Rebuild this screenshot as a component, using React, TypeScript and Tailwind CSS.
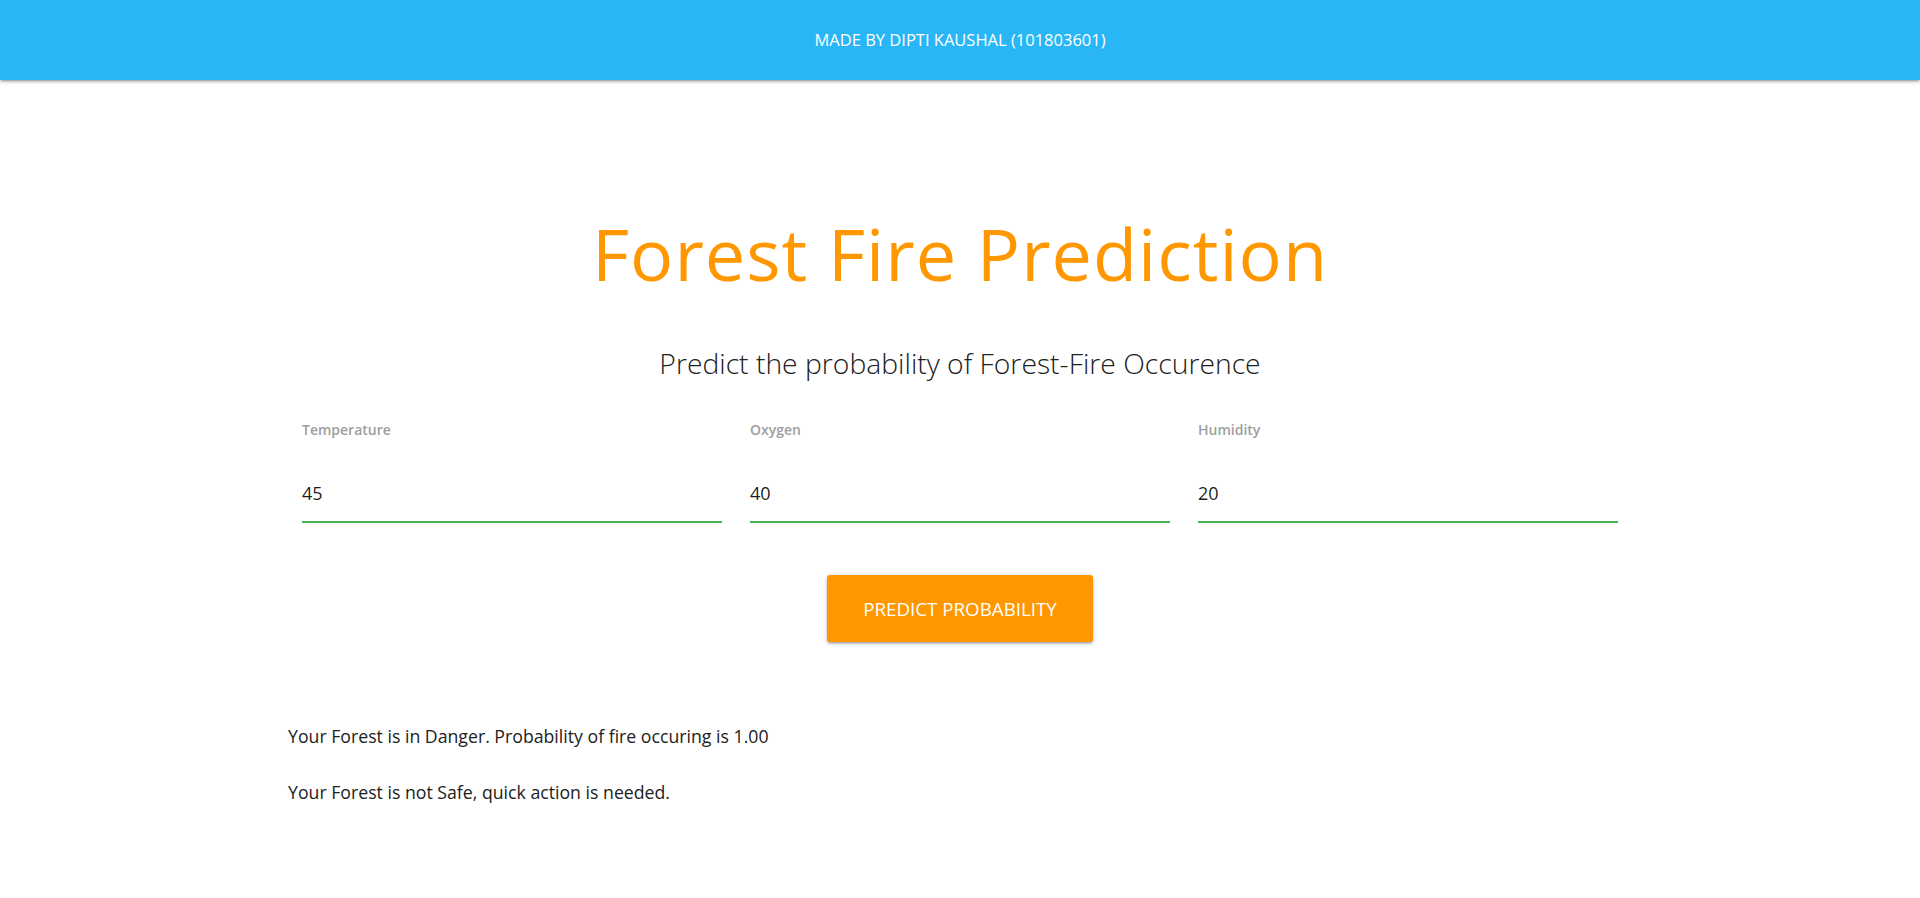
import React from 'react';

const fields = [
  { id: 'temperature', label: 'Temperature', value: '45' },
  { id: 'oxygen', label: 'Oxygen', value: '40' },
  { id: 'humidity', label: 'Humidity', value: '20' },
];

export default function App() {
  return (
    <div className="min-h-[898px] bg-white font-['Open_Sans','Noto_Sans',sans-serif] text-[#212121]">
      {/* Nav */}
      <nav className="h-[80px] bg-[#29b6f6] flex items-center justify-center shadow-[0_2px_2px_0_rgba(0,0,0,0.14),0_3px_1px_-2px_rgba(0,0,0,0.12),0_1px_5px_0_rgba(0,0,0,0.2)]">
        <span className="text-white text-[16.5px] uppercase leading-none">Made by Dipti Kaushal (101803601)</span>
      </nav>

      <div className="w-[70%] mx-auto">
        <h1 className="mt-[137px] text-center text-[#ff9800] text-[72px] leading-none tracking-[1px] font-normal">
          Forest Fire Prediction
        </h1>
        <h5 className="mt-[60px] text-center text-[28.3px] leading-none font-light text-[#212121]">
          Predict the probability of Forest-Fire Occurence
        </h5>

        <form className="grid grid-cols-3 mt-[46px]" onSubmit={(e) => e.preventDefault()}>
          {fields.map((f) => (
            <div key={f.id} className="px-[14px]">
              <label htmlFor={f.id} className="block text-[14px] leading-none font-semibold text-[#9e9e9e]">
                {f.label}
              </label>
              <input
                id={f.id}
                defaultValue={f.value}
                className="mt-[28px] block w-full h-[57px] text-[18px] text-black/90 outline-none border-b border-[#4caf50] shadow-[0_1px_0_0_#4caf50] bg-transparent"
              />
            </div>
          ))}
        </form>

        <div className="flex justify-center mt-[53px]">
          <button className="h-[67px] w-[266px] rounded-[3px] bg-[#ff9800] text-white text-[18.75px] uppercase shadow-[0_2px_2px_0_rgba(0,0,0,0.14),0_3px_1px_-2px_rgba(0,0,0,0.12),0_1px_5px_0_rgba(0,0,0,0.2)]">
            Predict Probability
          </button>
        </div>

        <div className="mt-[86px] text-[17.7px] leading-none text-[#212121]">
          <p>Your Forest is in Danger. Probability of fire occuring is 1.00</p>
          <p className="mt-[38px]">Your Forest is not Safe, quick action is needed.</p>
        </div>
      </div>
    </div>
  );
}
